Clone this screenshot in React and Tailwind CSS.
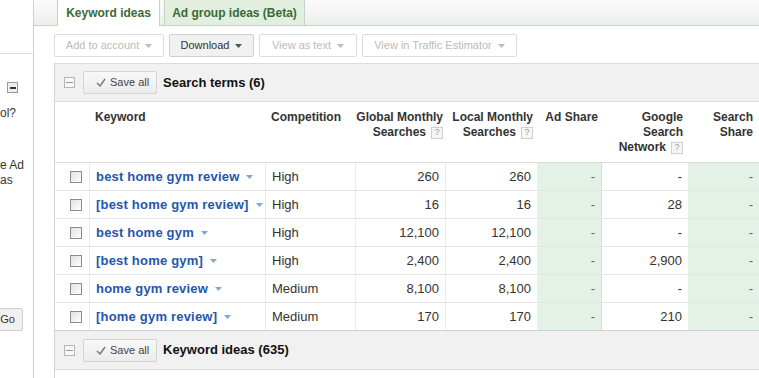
import React from 'react';

const rows = [
  { kw: 'best home gym review', comp: 'High', global: '260', local: '260', ad: '-', gsn: '-', share: '-' },
  { kw: '[best home gym review]', comp: 'High', global: '16', local: '16', ad: '-', gsn: '28', share: '-' },
  { kw: 'best home gym', comp: 'High', global: '12,100', local: '12,100', ad: '-', gsn: '-', share: '-' },
  { kw: '[best home gym]', comp: 'High', global: '2,400', local: '2,400', ad: '-', gsn: '2,900', share: '-' },
  { kw: 'home gym review', comp: 'Medium', global: '8,100', local: '8,100', ad: '-', gsn: '-', share: '-' },
  { kw: '[home gym review]', comp: 'Medium', global: '170', local: '170', ad: '-', gsn: '210', share: '-' },
];

const cols = 'grid grid-cols-[35px_176px_90px_90px_91px_65px_86px_71px]';

function Caret({ color = '#555' }) {
  return (
    <svg width="7" height="4" viewBox="0 0 7 4" className="shrink-0">
      <path d="M0 0h7L3.5 4z" fill={color} />
    </svg>
  );
}

function Help() {
  return (
    <span className="inline-flex w-[12px] h-[12px] ml-[5px] items-center justify-center border border-[#cfcfcf] bg-[#f6f6f6] text-[9px] font-normal text-[#999] align-middle leading-none">
      ?
    </span>
  );
}

function ToolButton({ label, width, enabled }) {
  return (
    <div
      className={`flex items-center justify-center gap-[6px] h-[23px] border rounded-[2px] text-[11px] ${width} ${
        enabled ? 'bg-[#f1f1f1] border-[#cfcfcf] text-[#333]' : 'bg-white border-[#dcdcdc] text-[#bbb]'
      }`}
    >
      <span>{label}</span>
      <Caret color={enabled ? '#555' : '#bbb'} />
    </div>
  );
}

function SectionBar({ title, top }) {
  return (
    <div className={`flex items-center h-[39px] bg-[#f1f1f1] border-b border-[#dcdcdc] ${top}`}>
      <div className="ml-[9px] w-[11px] h-[11px] border border-[#b5b5b5] bg-[#f7f7f7] flex items-center justify-center">
        <div className="w-[7px] h-px bg-[#9a9a9a]" />
      </div>
      <div className="ml-[8px] flex items-center gap-[4px] w-[74px] h-[23px] pl-[12px] border border-[#d4d4d4] rounded-[2px] bg-gradient-to-b from-[#f8f8f8] to-[#ececec] text-[11px] text-[#444]">
        <svg width="10" height="9" viewBox="0 0 10 9">
          <path d="M1 5l3 3 5-7" fill="none" stroke="#777" strokeWidth="1.4" />
        </svg>
        <span>Save all</span>
      </div>
      <div className="ml-[6px] text-[13px] font-bold text-[#111]">{title}</div>
    </div>
  );
}

export default function App() {
  return (
    <div className="flex w-[759px] h-[378px] overflow-hidden bg-white font-['Liberation_Sans',Arial,sans-serif] text-[#333]">
      <aside className="w-[34px] shrink-0 border-r border-[#cfcfcf] overflow-hidden flex flex-col">
        <div className="h-[54px] border-b border-[#dedede]" />
        <div className="mt-[28px] ml-[7px] w-[11px] h-[11px] border border-[#9a9a9a] bg-[#eeeeee] flex items-center justify-center">
          <div className="w-[6px] h-[2px] bg-[#333]" />
        </div>
        <div className="mt-[13px] text-[12px] leading-[15px] whitespace-nowrap">ol?</div>
        <div className="mt-[37px] text-[12px] leading-[15px] whitespace-nowrap">
          e Ad
          <br />
          as
        </div>
        <div className="mt-[120px] -ml-[20px] w-[43px] h-[23px] shrink-0 flex items-center justify-end pr-[7px] border border-[#d0d0d0] rounded-[2px] bg-[#f1f1f1] text-[11px] text-[#333]">
          Go
        </div>
      </aside>

      <main className="flex-1 flex flex-col min-w-0">
        <div className="h-[26px] shrink-0 flex items-end bg-gradient-to-b from-[#fbfbfb] to-[#eceeec] border-b border-[#c3d4c3]">
          <div className="ml-[23px] w-[103px] h-[26px] -mb-px flex items-center justify-center bg-white border-x border-[#c3d4c3] text-[12px] font-bold text-[#3b6a37]">
            Keyword ideas
          </div>
          <div className="ml-[4px] w-[141px] h-[25px] flex items-center justify-center bg-[#e2efdf] border-x border-[#c3d4c3] text-[12px] font-bold text-[#3b6a37]">
            Ad group ideas (Beta)
          </div>
        </div>

        <div className="pl-[20px] flex flex-col">
          <div className="mt-[8px] flex gap-[5px]">
            <ToolButton label="Add to account" width="w-[110px]" enabled={false} />
            <ToolButton label="Download" width="w-[85px]" enabled />
            <ToolButton label="View as text" width="w-[98px]" enabled={false} />
            <ToolButton label="View in Traffic Estimator" width="w-[155px]" enabled={false} />
          </div>

          <div className="mt-[6px] border-l border-[#d4d4d4] h-[400px]">
            <SectionBar title="Search terms (6)" top="border-t border-[#dcdcdc]" />

            <div className={`${cols} h-[61px] border-b border-[#dadada] text-[12px] font-bold leading-[15px] text-[#333]`}>
              <div />
              <div className="pl-[5px] pt-[8px]">Keyword</div>
              <div className="pl-[5px] pt-[8px]">Competition</div>
              <div className="pr-[3px] pt-[8px] text-right">
                Global Monthly
                <br />
                Searches
                <Help />
              </div>
              <div className="pr-[4px] pt-[8px] text-right">
                Local Monthly
                <br />
                Searches
                <Help />
              </div>
              <div className="pr-[4px] pt-[8px] text-right">Ad Share</div>
              <div className="pr-[5px] pt-[8px] text-right">
                Google
                <br />
                Search
                <br />
                Network
                <Help />
              </div>
              <div className="pr-[6px] pt-[8px] text-right">
                Search
                <br />
                Share
              </div>
            </div>

            {rows.map((r, i) => (
              <div
                key={r.kw}
                className={`${cols} h-[28px] border-b text-[13px] ${
                  i === rows.length - 1 ? 'border-[#cfcfcf]' : 'border-[#e4e4e4]'
                }`}
              >
                <div className="flex items-center pl-[15px] border-r border-[#ebebeb]">
                  <div className="w-[12px] h-[12px] border border-[#8c8c8c] bg-gradient-to-br from-[#e2e2e2] to-white" />
                </div>
                <div className="flex items-center gap-[7px] pl-[6px] border-r border-[#ebebeb] font-bold text-[#2456ad] whitespace-nowrap tracking-[0.2px]">
                  <span>{r.kw}</span>
                  <Caret color="#86a3d6" />
                </div>
                <div className="flex items-center pl-[6px] border-r border-[#ebebeb]">{r.comp}</div>
                <div className="flex items-center justify-end pr-[6px] border-r border-[#ebebeb]">{r.global}</div>
                <div className="flex items-center justify-end pr-[6px]">{r.local}</div>
                <div className="flex items-center justify-end pr-[6px] bg-[#e4f1e6] border-r border-[#d6dfd6] text-[#666]">{r.ad}</div>
                <div className="flex items-center justify-end pr-[6px] text-[#333]">{r.gsn}</div>
                <div className="flex items-center justify-end pr-[6px] bg-[#e4f1e6] text-[#666]">{r.share}</div>
              </div>
            ))}

            <SectionBar title="Keyword ideas (635)" top="" />
          </div>
        </div>
      </main>
    </div>
  );
}
